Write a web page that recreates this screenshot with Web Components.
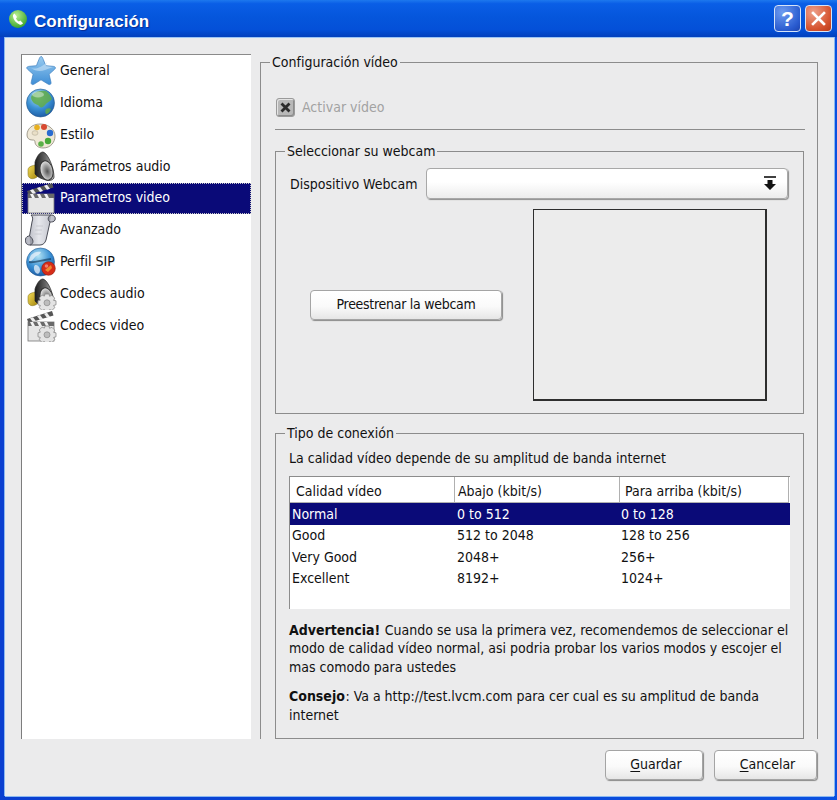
<!DOCTYPE html>
<html lang="es">
<head>
<meta charset="utf-8">
<title>Configuración</title>
<style>
  html, body { margin: 0; padding: 0; background: #0a50d8; }
  body { font: 14px/18px "DejaVu Sans", "Liberation Sans", Arial, sans-serif; font-stretch: condensed; color: #111; }
</style>
</head>
<body>
<x-window heading="Configuración">
  <x-nav slot="nav">
    <x-nav-item icon="star">General</x-nav-item>
    <x-nav-item icon="globe">Idioma</x-nav-item>
    <x-nav-item icon="palette">Estilo</x-nav-item>
    <x-nav-item icon="speaker">Parámetros audio</x-nav-item>
    <x-nav-item icon="clapper" selected>Parametros video</x-nav-item>
    <x-nav-item icon="scroll">Avanzado</x-nav-item>
    <x-nav-item icon="sip">Perfil SIP</x-nav-item>
    <x-nav-item icon="speakergear">Codecs audio</x-nav-item>
    <x-nav-item icon="clappergear">Codecs video</x-nav-item>
  </x-nav>

  <x-group heading="Configuración vídeo" variant="outer">
    <x-check>Activar vídeo</x-check>
    <x-rule></x-rule>
    <x-group heading="Seleccionar su webcam" variant="webcam">
      <x-combo>Dispositivo Webcam</x-combo>
      <x-preview>Preestrenar la webcam</x-preview>
    </x-group>
    <x-group heading="Tipo de conexión" variant="conn">
      <x-para gap="1">La calidad vídeo depende de su amplitud de banda internet</x-para>
      <x-list></x-list>
      <x-para gap="12"><b>Advertencia!</b> Cuando se usa la primera vez, recomendemos de seleccionar el modo de calidad vídeo normal, asi podria probar los varios modos y escojer el mas comodo para ustedes</x-para>
      <x-para gap="11"><b>Consejo</b>: Va a http://test.lvcm.com para cer cual es su amplitud de banda internet</x-para>
    </x-group>
  </x-group>

  <x-button slot="footer" width="98" key="G">uardar</x-button>
  <x-button slot="footer" width="103" key="C">ancelar</x-button>
</x-window>

<script>
/* Icons, all drawn on a 32 x 32 box */
const SPEAKER = `
  <defs>
    <linearGradient id="gold" x1="0" y1="0" x2="1" y2="1"><stop offset="0" stop-color="#f4dc58"/><stop offset="1" stop-color="#a88a10"/></linearGradient>
    <linearGradient id="cone" x1="0" y1="0" x2="1" y2="0"><stop offset="0" stop-color="#1c1c1c"/><stop offset=".55" stop-color="#666"/><stop offset="1" stop-color="#bbb"/></linearGradient>
    <radialGradient id="dish" cx=".55" cy=".55" r=".6"><stop offset="0" stop-color="#555"/><stop offset=".55" stop-color="#a4a4a4"/><stop offset="1" stop-color="#ececec"/></radialGradient>
  </defs>
  <path d="M3 19c0-3 3-4 7-5l2 12c-4 3-9 2-9-3z" fill="url(#gold)" stroke="#7a6a10" stroke-width=".5"/>
  <path d="M10 11c2-6 5-10 8-10 5 1 11 16 11 25 0 3-4 4-8 3-4-1-9-3-11-6z" fill="url(#cone)" stroke="#222" stroke-width=".7"/>
  <ellipse cx="21.500" cy="19.500" rx="6.800" ry="10.400" transform="rotate(-14 21.500 19.500)" fill="#333"/>
  <ellipse cx="21.500" cy="19.500" rx="5.800" ry="9.400" transform="rotate(-14 21.500 19.500)" fill="url(#dish)"/>`;
const CLAPPER = `
  <path d="M2 9 27 1l1.500 4.500L3.500 13z" fill="#555"/>
  <path d="M5 8.200l3-1 3 4-3 1zM12 6l3-1 3 4-3 1zM19 3.800l3-1 3 4-3 1z" fill="#eee"/>
  <rect x="3" y="12" width="26" height="19" fill="#e6e6e6" stroke="#777" stroke-width=".8"/>
  <rect x="3" y="12" width="26" height="4" fill="#6a6a6a"/>
  <path d="M5 12h3l2 4H7zM12 12h3l2 4h-3zM19 12h3l2 4h-3z" fill="#f2f2f2"/>`;
const GEAR = `
  <g transform="translate(22 24)">
    <path d="M-2-8h4l.6 2.300 2.300-1 2.800 2.800-1 2.300L9-1.200v4l-2.300.6 1 2.300-2.800 2.800-2.300-1L2 9.800h-4l-.6-2.300-2.300 1-2.800-2.800 1-2.300L-9 2.800v-4l2.300-.6-1-2.300 2.800-2.800 2.300 1z" fill="#e4e4e4" stroke="#8a8a8a" stroke-width=".8"/>
    <circle r="3" cy=".8" fill="#bdbdbd" stroke="#888" stroke-width=".7"/>
  </g>`;
const GLOBE = `
  <defs><radialGradient id="sea" cx=".42" cy=".28" r=".85"><stop offset="0" stop-color="#b4e4f4"/><stop offset=".5" stop-color="#3a90d4"/><stop offset="1" stop-color="#124a94"/></radialGradient></defs>
  <circle cx="15.500" cy="16" r="14" fill="url(#sea)" stroke="#2a5c90" stroke-width=".6"/>`;

const ICONS = {
  star: `<defs><linearGradient id="s" x1="0" y1="0" x2="0" y2="1"><stop offset="0" stop-color="#9accf0"/><stop offset="1" stop-color="#3f8ed6"/></linearGradient></defs>
    <path d="M16 1.500c1 0 1.500 1 2.300 3l2.500 6.200 7 .6c2.500.2 3.500 1.500 1.800 3l-5.500 5 1.800 7.500c.6 2.500-.8 3.500-3 2.200L16 24.800l-6.700 4.200c-2.200 1.300-3.600.3-3-2.200l1.800-7.500-5.500-5c-1.700-1.500-.7-2.800 1.800-3l7-.6 2.500-6.200c.8-2 1.300-3 2.300-3z" fill="url(#s)" stroke="#3d80c0" stroke-width=".7"/>
    <path d="M6 13c6 2 12-2 16-6l-1 4 7 1-8 3c-5 2-10 1-14-2z" fill="#cfe6f8" opacity=".55"/>`,
  globe: `${GLOBE}
    <path d="M8 7c3-3 9-4 13-3 3 2 5 5 6 8-2 3-5 3-7 6s-5 3-6 1-4-1-6-4-3-5 0-8zM21 22c2-1 4-1 5 0-1 3-3 5-5 5-1-2-1-3 0-5z" fill="#62ac48" opacity=".85"/>
    <ellipse cx="13" cy="7.500" rx="6" ry="3" fill="#fff" opacity=".4"/>`,
  palette: `<path d="M15 5C7 5 2 10 2 16c0 3 2 5 5 5 2 0 3 0 3 2 0 3 3 6 8 6 8 0 12-6 12-12S24 5 15 5z" fill="#efe8d6" stroke="#8d8878" stroke-width=".8"/>
    <ellipse cx="10" cy="14" rx="3" ry="2.300" fill="#e9dfc6" stroke="#a8a28c" stroke-width=".5"/>
    <circle cx="12" cy="8.500" r="2.800" fill="#e8b020"/><circle cx="19" cy="8" r="3" fill="#d84a30"/>
    <circle cx="25" cy="14" r="3.200" fill="#2a6cd0"/><circle cx="23" cy="22" r="3.200" fill="#48a838"/>
    <circle cx="16" cy="25" r="2.800" fill="#5bb048"/>`,
  speaker: SPEAKER,
  clapper: CLAPPER,
  scroll: `<defs><linearGradient id="p" x1="0" y1="0" x2="1" y2="0"><stop offset="0" stop-color="#aeb0ba"/><stop offset=".45" stop-color="#e6e7ec"/><stop offset="1" stop-color="#b8bac4"/></linearGradient></defs>
    <path d="M6 1H26c3 0 5 2 4 5-1 2-3 2-5 2L21 26c-1 3-3 5-6 5H5C1 31 0 28 .5 25c.6-2 2-3 4-3L7 8C8 5 8 3 6 1z" fill="url(#p)" stroke="#4a4c56" stroke-width="1"/>
    <path d="M26 1c-3 1-4 5-1 7" fill="#9c9ea8" stroke="#4a4c56"/>
    <path d="M5 31c4-1 4-6-.5-9" fill="#9c9ea8" stroke="#4a4c56"/>
    <path d="M11 12h7M10 16h7M9.500 20h7" stroke="#c4c5cc" stroke-width=".8"/>`,
  sip: `${GLOBE}
    <path d="M6 9c3-3 7-4 10-3-1 3-4 3-6 5s-3 5-6 4c0-2 1-4 2-6zM10 19c3 0 5 2 5 5s-2 5-4 3-3-6-1-8z" fill="#e9f2fa" opacity=".75"/>
    <path d="M4 16c6 1 12-2 22-3" stroke="#10304c" stroke-width="2" fill="none" opacity=".6"/>
    <circle cx="23.500" cy="22.500" r="6.800" fill="#d62c18" stroke="#8c1a0c" stroke-width=".6"/>
    <path d="M20 24l6-5 1 3-4 4z" fill="#ee8a30"/>
    <circle cx="21.500" cy="20" r="1.800" fill="#f08070"/>`,
  speakergear: `${SPEAKER}${GEAR}`,
  clappergear: `${CLAPPER}${GEAR}`,
};

class XIcon extends HTMLElement {
  connectedCallback() {
    const size = this.getAttribute('size') || 32;
    this.attachShadow({ mode: 'open' }).innerHTML = `
      <style>:host { display: block; width: ${size}px; height: ${size}px; flex: none; } svg { display: block; }</style>
      <svg width="${size}" height="${size}" viewBox="0 0 32 32">${ICONS[this.getAttribute('name')] || ''}</svg>`;
  }
}
customElements.define('x-icon', XIcon);

class XWindow extends HTMLElement {
  connectedCallback() {
    this.attachShadow({ mode: 'open' }).innerHTML = `
      <style>
        :host {
          display: flex; flex-direction: column;
          width: 837px; height: 800px; box-sizing: border-box;
          padding: 0 3px 4px 5px;
          background: linear-gradient(90deg, #0a3fd0 0, #0a50e0 100%);
        }
        .bar {
          height: 37px; flex: none; margin: 0 -3px 0 -5px; padding: 0 5px 0 8px;
          display: flex; align-items: center; gap: 4px; box-sizing: border-box;
          background: linear-gradient(180deg, #1d78ee 0, #0a5ee6 10%, #0556dc 45%, #0450d8 80%, #0340bc 100%);
        }
        .title {
          flex: 1; color: #fff; font: bold 17px/20px "Liberation Sans", sans-serif; margin: 6px 0 0 2px;
          text-shadow: 1px 1px 1px #0a2c90;
        }
        .tool {
          width: 27px; height: 27px; box-sizing: border-box; border: 1px solid #d6e4f8; border-radius: 4px;
          display: flex; align-items: center; justify-content: center;
          font: bold 21px/1 "Liberation Sans", sans-serif; color: #fff;
          background: radial-gradient(circle at 30% 25%, #6d9cf0, #2a5cd0 70%, #1c44b0);
        }
        .tool.close { background: radial-gradient(circle at 30% 25%, #eea08a, #d65430 65%, #b83a18); }
        .client {
          flex: 1; min-height: 0; display: flex; flex-direction: column;
          background: #ebebec; padding: 16px 16px 0 16px;
          border-top: 1px solid #9cc4f4; box-shadow: -1px 0 0 #8ab8f0, 1px 0 0 #8ab8f0, 0 1px 0 #8ab8f0;
        }
        .main { height: 685px; flex: none; display: flex; gap: 9px; }
        .main ::slotted(x-nav) { width: 230px; flex: none; }
        .main ::slotted(x-group) { flex: 1; min-width: 0; }
        .foot { display: flex; justify-content: flex-end; gap: 11px; padding-top: 11px; margin-right: 1px; }
      </style>
      <div class="bar">
        <svg width="20" height="20" viewBox="0 0 20 20">
          <defs><radialGradient id="g" cx=".4" cy=".3" r=".8"><stop offset="0" stop-color="#b8f090"/><stop offset="1" stop-color="#2c9c20"/></radialGradient></defs>
          <circle cx="10" cy="10" r="9" fill="url(#g)"/>
          <path d="M6.500 4.500 9 8 8 9.500c.6 1.300 1.500 2.300 2.800 3l1.500-1 2.700 2.700c-1 1.300-2.300 1.800-3.500 1.300C8 14 5.500 11 5 7.500c-.2-1.200.5-2.300 1.500-3z" fill="#fff"/>
        </svg>
        <span class="title">${this.getAttribute('heading')}</span>
        <span class="tool">?</span>
        <span class="tool close"><svg width="15" height="15" viewBox="0 0 15 15"><path d="M2 2 13 13M13 2 2 13" stroke="#fff" stroke-width="2.600" stroke-linecap="square"/></svg></span>
      </div>
      <div class="client">
        <div class="main"><slot name="nav"></slot><slot></slot></div>
        <div class="foot"><slot name="footer"></slot></div>
      </div>`;
  }
}
customElements.define('x-window', XWindow);

class XNav extends HTMLElement {
  connectedCallback() {
    this.attachShadow({ mode: 'open' }).innerHTML = `
      <style>
        :host {
          display: block; box-sizing: border-box; background: #fff;
          border-top: 1px solid #8a8a8a; border-left: 1px solid #7d7d7d;
        }
      </style>
      <slot></slot>`;
  }
}
customElements.define('x-nav', XNav);

class XNavItem extends HTMLElement {
  connectedCallback() {
    const selected = this.hasAttribute('selected');
    this.attachShadow({ mode: 'open' }).innerHTML = `
      <style>
        :host {
          display: flex; align-items: center; gap: 3px; height: 31.875px; box-sizing: border-box;
          padding-left: 3px; white-space: nowrap;
          ${selected ? 'background: #0a0a78; color: #fff; outline: 1px dotted #c8c8c8; outline-offset: -1px;' : ''}
        }
        span { margin-top: -2px; }
      </style>
      <x-icon name="${this.getAttribute('icon')}"></x-icon>
      <span><slot></slot></span>`;
  }
}
customElements.define('x-nav-item', XNavItem);

const GROUP_BOX = {
  outer: 'padding: 28px 13px 0 14px; border-bottom: 0;',
  webcam: 'padding: 9px 15px 12px 14px; margin: 13px 0 0;',
  conn: 'padding: 7px 13px 0 13px; margin: 11px 0 0; flex: 1;',
};
const LEGEND_LEFT = { outer: -5, webcam: -5, conn: -4 };

class XGroup extends HTMLElement {
  connectedCallback() {
    const variant = this.getAttribute('variant');
    this.attachShadow({ mode: 'open' }).innerHTML = `
      <style>
        :host { display: flex; flex-direction: column; min-height: 0; ${variant === 'conn' ? 'flex: 1;' : ''} }
        fieldset {
          flex: 1; margin: 0; min-width: 0; min-height: 0; box-sizing: border-box;
          border: 1px solid #8c8c8c; display: flex; flex-direction: column;
          ${GROUP_BOX[variant]}
        }
        legend { padding: 0 2px; line-height: 16px; margin-left: ${LEGEND_LEFT[variant]}px; }
      </style>
      <fieldset>
        <legend>${this.getAttribute('heading')}</legend>
        <slot></slot>
      </fieldset>`;
  }
}
customElements.define('x-group', XGroup);

class XCheck extends HTMLElement {
  connectedCallback() {
    this.attachShadow({ mode: 'open' }).innerHTML = `
      <style>
        :host { display: flex; align-items: center; gap: 7px; height: 19px; padding-left: 1px; color: #a2a2a2; }
        .box {
          width: 19px; height: 19px; box-sizing: border-box; border-radius: 3px; border: 1px solid #9a9a9a;
          background: #b8b8b8; display: flex; align-items: center; justify-content: center;
          box-shadow: inset 1px 1px 0 #e4e4e4, inset -1px -1px 0 #8c8c8c;
        }
        .label { margin-top: -2px; }
      </style>
      <span class="box"><svg width="13" height="13" viewBox="0 0 13 13"><path d="M2.500 2.500 10.500 10.500M10.500 2.500 2.500 10.500" stroke="#2c2c2c" stroke-width="2.800"/></svg></span>
      <span class="label"><slot></slot></span>`;
  }
}
customElements.define('x-check', XCheck);

class XRule extends HTMLElement {
  connectedCallback() {
    this.attachShadow({ mode: 'open' }).innerHTML = `
      <style>:host { display: block; height: 1px; background: #8c8c8c; margin: 12px -1px 0 0; }</style>`;
  }
}
customElements.define('x-rule', XRule);

class XCombo extends HTMLElement {
  connectedCallback() {
    this.attachShadow({ mode: 'open' }).innerHTML = `
      <style>
        :host { display: flex; align-items: center; gap: 7px; height: 31px; white-space: nowrap; }
        label { width: 129px; flex: none; }
        .field {
          flex: 1; height: 31px; box-sizing: border-box; display: flex; align-items: center; justify-content: flex-end;
          padding-right: 10px; border: 1px solid #a8a8a8; border-radius: 4px;
          background: linear-gradient(180deg, #fff 0, #fff 45%, #ececec 100%);
          box-shadow: 1px 1px 1px #8e8e8e;
        }
      </style>
      <label><slot></slot></label>
      <div class="field">
        <svg width="14" height="15" viewBox="0 0 14 15"><path d="M1 1h12" stroke="#111" stroke-width="1.600"/><path d="M4.500 4h5v4H13l-6 6-6-6h3.500z" fill="#111"/></svg>
      </div>`;
  }
}
customElements.define('x-combo', XCombo);

class XPreview extends HTMLElement {
  connectedCallback() {
    this.attachShadow({ mode: 'open' }).innerHTML = `
      <style>
        :host { display: flex; align-items: center; gap: 31px; padding: 10px 0 0 20px; }
        x-button { letter-spacing: -.28px; }
        .screen { width: 234px; height: 192px; flex: none; box-sizing: border-box; border: 2px solid #2e2e2e; border-width: 1.500px 2px 2px 1.500px; background: #ececec; }
      </style>
      <x-button width="192"><slot></slot></x-button>
      <div class="screen"></div>`;
  }
}
customElements.define('x-preview', XPreview);

class XButton extends HTMLElement {
  connectedCallback() {
    const key = this.getAttribute('key');
    this.attachShadow({ mode: 'open' }).innerHTML = `
      <style>
        :host {
          display: flex; align-items: center; justify-content: center; flex: none;
          width: ${this.getAttribute('width')}px; height: 30px; box-sizing: border-box;
          padding: 0 0 2px ${key ? 4 : 0}px;
          border: 1px solid #a4a4a4; border-radius: 4px; white-space: nowrap;
          background: linear-gradient(180deg, #fff 0, #fafafa 55%, #e6e6e6 100%);
          box-shadow: 1px 1px 1px #8a8a8a;
        }
        u { text-underline-offset: 2px; }
      </style>
      <span>${key ? `<u>${key}</u>` : ''}<slot></slot></span>`;
  }
}
customElements.define('x-button', XButton);

class XPara extends HTMLElement {
  connectedCallback() {
    this.attachShadow({ mode: 'open' }).innerHTML = `
      <style>
        :host { display: block; padding-top: ${this.getAttribute('gap')}px; line-height: 18.500px; }
        ::slotted(b) { margin-right: .5px; }
      </style>
      <slot></slot>`;
  }
}
customElements.define('x-para', XPara);

const COLUMNS = ['Calidad vídeo', 'Abajo (kbit/s)', 'Para arriba (kbit/s)'];
const ROWS = [
  ['Normal', '0 to 512', '0 to 128'],
  ['Good', '512 to 2048', '128 to 256'],
  ['Very Good', '2048+', '256+'],
  ['Excellent', '8192+', '1024+'],
];

class XList extends HTMLElement {
  connectedCallback() {
    const head = COLUMNS.map(c => `<div class="h">${c}</div>`).join('');
    const rows = ROWS.map((r, i) =>
      `<div class="row${i === 0 ? ' sel' : ''}">${r.map(c => `<span>${c}</span>`).join('')}</div>`).join('');
    this.attachShadow({ mode: 'open' }).innerHTML = `
      <style>
        :host {
          display: block; height: 133px; box-sizing: border-box; flex: none; margin-top: 8px;
          background: #fff; border-left: 1px solid #8c8c8c; border-top: 1px solid #8c8c8c;
        }
        .head { display: grid; grid-template-columns: 165px 165px 169px; height: 26px; margin-right: 2px; }
        .h { padding: 5px 0 0 6px; border-right: 1px solid #b0b0b0; border-bottom: 1px solid #b0b0b0; box-sizing: border-box; }
        .h + .h { padding-left: 3px; }
        .h + .h + .h { padding-left: 5px; }
        .row { display: grid; grid-template-columns: 165px 164px 1fr; height: 21.400px; align-items: center; padding-left: 2px; }
        .row.sel { height: 22px; background: #0a0a78; color: #fff; }
      </style>
      <div class="head">${head}</div>
      ${rows}`;
  }
}
customElements.define('x-list', XList);
</script>
</body>
</html>
